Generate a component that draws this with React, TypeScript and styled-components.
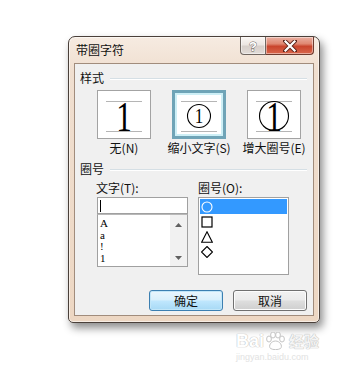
import React from "react";
import styled, { createGlobalStyle } from "styled-components";

const Global = createGlobalStyle`
  html, body { margin: 0; padding: 0; background: #ffffff; }
  body { font-family: "Noto Sans CJK SC", "Noto Sans", sans-serif; }
  * { box-sizing: border-box; }
`;

const Page = styled.div`
  position: relative;
  width: 353px;
  height: 375px;
  overflow: hidden;
  padding: 36px 0 0 68px;
  background: #ffffff;
`;

const Dialog = styled.div`
  width: 252px;
  height: 287px;
  display: flex;
  flex-direction: column;
  padding: 0 5px 6px 5px;
  border: 1px solid #4a403a;
  border-radius: 7px 7px 5px 5px;
  background: linear-gradient(180deg, #f6ebe1 0%, #f0dfd0 12%, #edd7c3 100%);
  box-shadow: inset 0 0 0 1px rgba(255, 255, 255, 0.55), 3px 5px 9px rgba(0, 0, 0, 0.45);
`;

const TitleBar = styled.div`
  height: 26px;
  display: flex;
  justify-content: space-between;
  align-items: flex-start;
`;

const Title = styled.div`
  padding: 6px 0 0 2px;
  font-size: 12px;
  line-height: 14px;
  color: #111;
`;

const CaptionButtons = styled.div`
  display: flex;
`;

const CaptionButton = styled.div<{ $close?: boolean }>`
  width: ${(p) => (p.$close ? 48 : 26)}px;
  height: 18px;
  display: flex;
  align-items: center;
  justify-content: center;
  border: 1px solid ${(p) => (p.$close ? "#6e3a2e" : "#6f6660")};
  border-top: none;
  border-left: ${(p) => (p.$close ? "none" : "1px solid #6f6660")};
  border-radius: ${(p) => (p.$close ? "0 0 4px 0" : "0 0 0 4px")};
  background: ${(p) =>
    p.$close
      ? "linear-gradient(180deg, #eab0a2 0%, #e08872 40%, #c9452d 55%, #d9674c 100%)"
      : "linear-gradient(180deg, #fbf7f4 0%, #ece6e2 45%, #d7cfca 55%, #e2dcd8 100%)"};
  box-shadow: inset 0 0 0 1px rgba(255, 255, 255, 0.45);
`;

const Client = styled.div`
  flex: 1;
  display: flex;
  flex-direction: column;
  background: #f0f0f0;
  border: 1px solid #a18c7c;
  padding: 7px 6px 4px 5px;
`;

const GroupHeader = styled.div`
  display: flex;
  align-items: center;
  gap: 6px;
  height: 14px;
  font-size: 12px;
  line-height: 14px;
  color: #111;
`;

const EtchedLine = styled.div`
  flex: 1;
  height: 2px;
  border-top: 1px solid #d5dfe5;
  border-bottom: 1px solid #ffffff;
  margin-top: 1px;
`;

const StylesRow = styled.div`
  display: flex;
  gap: 21px;
  padding-left: 17px;
  margin-top: 5px;
`;

const StyleColumn = styled.div`
  width: 54px;
  display: flex;
  flex-direction: column;
  align-items: center;
`;

const StyleBox = styled.div<{ $selected?: boolean }>`
  width: 54px;
  height: 49px;
  background: #ffffff;
  border: ${(p) => (p.$selected ? "3px solid #6fa4b7" : "1px solid #a3a3a3")};
  box-shadow: ${(p) => (p.$selected ? "inset 0 0 0 2px #cdeff6" : "none")};
  display: flex;
  align-items: center;
  justify-content: center;
  svg { overflow: visible; }
`;

const StyleLabel = styled.div`
  margin-top: 2px;
  white-space: nowrap;
  font-size: 12px;
  line-height: 14px;
  color: #111;
`;

const CircleHeader = styled(GroupHeader)`
  margin-top: 7px;
`;

const ListsRow = styled.div`
  display: flex;
  gap: 10px;
  padding-left: 16px;
  margin-top: 5px;
`;

const ListColumn = styled.div<{ $w: number }>`
  width: ${(p) => p.$w}px;
  display: flex;
  flex-direction: column;
`;

const FieldLabel = styled.div`
  font-size: 12px;
  line-height: 14px;
  height: 14px;
  color: #111;
  margin-bottom: 2px;
  white-space: nowrap;
`;

const TextInput = styled.div`
  margin-left: 1px;
  height: 17px;
  background: #fff;
  border: 1px solid #a0a0a0;
  display: flex;
  align-items: center;
  padding-left: 2px;
`;

const Caret = styled.div`
  width: 1px;
  height: 12px;
  background: #000;
`;

const CharList = styled.div`
  margin-left: 1px;
  height: 53px;
  background: #fff;
  border: 1px solid #a0a0a0;
  border-top-color: #b8b8b8;
  display: flex;
`;

const CharItems = styled.div`
  flex: 1;
  padding: 3px 0 0 2px;
  font-family: "Liberation Serif", "DejaVu Serif", serif;
  font-size: 11px;
  line-height: 11.7px;
  color: #000;
`;

const ScrollTrack = styled.div`
  width: 17px;
  background: #f1f1f1;
  display: flex;
  flex-direction: column;
  justify-content: space-between;
  align-items: center;
  padding: 8px 0 6px;
`;

const ShapeList = styled.div`
  height: 78px;
  background: #fff;
  border: 1px solid #a0a0a0;
  padding: 1px 1px 0 1px;
  display: flex;
  flex-direction: column;
`;

const ShapeRow = styled.div<{ $selected?: boolean }>`
  height: 15px;
  display: flex;
  align-items: center;
  padding-left: 1px;
  background: ${(p) => (p.$selected ? "#3399ff" : "transparent")};
`;

const ButtonRow = styled.div`
  display: flex;
  justify-content: flex-end;
  gap: 10px;
  margin-top: auto;
`;

const PushButton = styled.div<{ $default?: boolean }>`
  width: 74px;
  height: 21px;
  display: flex;
  align-items: center;
  justify-content: center;
  font-size: 12px;
  color: #111;
  border-radius: 3px;
  border: 1px solid ${(p) => (p.$default ? "#3c7fb1" : "#707070")};
  background: ${(p) =>
    p.$default
      ? "linear-gradient(180deg, #eaf6fd 0%, #d9f0fc 45%, #bee6fd 55%, #a7d9f5 100%)"
      : "linear-gradient(180deg, #f2f2f2 0%, #ebebeb 45%, #dddddd 55%, #cfcfcf 100%)"};
  box-shadow: ${(p) =>
    p.$default ? "inset 0 0 0 1px #c2e6f8" : "inset 0 0 0 1px #fcfcfc"};
`;

const Watermark = styled.div`
  position: absolute;
  left: 236px;
  top: 320px;
  width: 92px;
  display: flex;
  flex-direction: column;
  align-items: flex-start;
  color: #e6e6e6;
  pointer-events: none;
`;

const WmTop = styled.div`
  display: flex;
  align-items: flex-end;
  height: 30px;
  font-family: "Liberation Sans", Arial, sans-serif;
  font-weight: bold;
  font-size: 18px;
  line-height: 18px;
  color: #ffffff;
  text-shadow: 0 0 1px #b8b8b8, 0 0 1px #b8b8b8;
`;

const WmCn = styled.span`
  font-family: "Noto Sans CJK SC", sans-serif;
  font-size: 15px;
  margin-left: 3px;
  color: #f4f4f4;
`;

const WmUrl = styled.div`
  margin-top: 2px;
  font-family: "Liberation Sans", Arial, sans-serif;
  font-size: 9px;
  line-height: 10px;
  color: #e2e2e2;
`;

const GuideLines = () => (
  <>
    <line x1="9" y1="11.5" x2="45" y2="11.5" stroke="#b5b5b5" strokeWidth="1" />
    <line x1="9" y1="41.5" x2="45" y2="41.5" stroke="#b5b5b5" strokeWidth="1" />
  </>
);

const serif = '"Liberation Serif", "DejaVu Serif", serif';

const BigOne = () => (
  <g transform="translate(27 0) scale(0.72 1) translate(-27 0)">
    <text x="27" y="41" textAnchor="middle" fontFamily={serif} fontSize="43" fill="#000">1</text>
  </g>
);

const StyleNone = () => (
  <svg width="52" height="47" viewBox="1 1 52 47">
    <GuideLines />
    <BigOne />
  </svg>
);

const StyleShrink = () => (
  <svg width="48" height="43" viewBox="3 3 48 43">
    <GuideLines />
    <circle cx="27" cy="26" r="11.5" fill="none" stroke="#000" strokeWidth="1.1" />
    <g transform="translate(27 0) scale(0.85 1) translate(-27 0)">
      <text x="27" y="33.3" textAnchor="middle" fontFamily={serif} fontSize="20" fill="#000">1</text>
    </g>
  </svg>
);

const StyleEnlarge = () => (
  <svg width="52" height="47" viewBox="1 1 52 47">
    <GuideLines />
    <circle cx="27" cy="26" r="14.5" fill="none" stroke="#000" strokeWidth="1.1" />
    <BigOne />
  </svg>
);

const ShapeIcon = ({ kind, color }: { kind: string; color: string }) => (
  <svg width="12" height="12" viewBox="0 0 12 12">
    {kind === "circle" && <circle cx="6" cy="6" r="5" fill="none" stroke={color} strokeWidth="1.1" />}
    {kind === "square" && <rect x="1" y="1" width="10" height="10" fill="none" stroke={color} strokeWidth="1.2" />}
    {kind === "triangle" && <polygon points="6,0.8 11.3,11.2 0.7,11.2" fill="none" stroke={color} strokeWidth="1.1" />}
    {kind === "diamond" && <polygon points="6,0.5 11.5,6 6,11.5 0.5,6" fill="none" stroke={color} strokeWidth="1.1" />}
  </svg>
);

const Arrow = ({ up }: { up?: boolean }) => (
  <svg width="7" height="4" viewBox="0 0 7 4">
    <polygon points={up ? "3.5,0 7,4 0,4" : "0,0 7,0 3.5,4"} fill="#606060" />
  </svg>
);

const HelpGlyph = () => (
  <svg width="12" height="13" viewBox="0 0 12 13">
    <text x="6" y="11.5" textAnchor="middle" fontFamily='"Liberation Sans", Arial, sans-serif' fontWeight="bold" fontSize="13" fill="#ffffff" stroke="#6a6560" strokeWidth="0.9" paintOrder="stroke">?</text>
  </svg>
);

const CloseGlyph = () => (
  <svg width="14" height="12" viewBox="0 0 14 12">
    <path d="M2 1 L12 11 M12 1 L2 11" stroke="#5a241a" strokeWidth="4" strokeLinecap="square" />
    <path d="M2.5 1.5 L11.5 10.5 M11.5 1.5 L2.5 10.5" stroke="#ffffff" strokeWidth="2.2" strokeLinecap="square" />
  </svg>
);

const Paw = () => (
  <svg width="22" height="18" viewBox="0 0 22 18">
    <g fill="#ffffff" stroke="#c4c4c4" strokeWidth="1">
      <ellipse cx="5" cy="7" rx="2.4" ry="3" />
      <ellipse cx="9" cy="3" rx="2.4" ry="3" />
      <ellipse cx="14" cy="3" rx="2.4" ry="3" />
      <ellipse cx="18" cy="7" rx="2.4" ry="3" />
      <path d="M11.5 9 C7 9 4 14 6.5 16.5 C9 18 14 18 16.5 16.5 C19 14 16 9 11.5 9 Z" />
    </g>
  </svg>
);

const shapes = ["circle", "square", "triangle", "diamond"];
const chars = ["A", "a", "!", "1"];

export default function App() {
  return (
    <>
      <Global />
      <Page>
        <Dialog>
          <TitleBar>
            <Title>带圈字符</Title>
            <CaptionButtons>
              <CaptionButton>
                <HelpGlyph />
              </CaptionButton>
              <CaptionButton $close>
                <CloseGlyph />
              </CaptionButton>
            </CaptionButtons>
          </TitleBar>
          <Client>
            <GroupHeader>
              样式
              <EtchedLine />
            </GroupHeader>
            <StylesRow>
              <StyleColumn>
                <StyleBox>
                  <StyleNone />
                </StyleBox>
                <StyleLabel>无(N)</StyleLabel>
              </StyleColumn>
              <StyleColumn>
                <StyleBox $selected>
                  <StyleShrink />
                </StyleBox>
                <StyleLabel>缩小文字(S)</StyleLabel>
              </StyleColumn>
              <StyleColumn>
                <StyleBox>
                  <StyleEnlarge />
                </StyleBox>
                <StyleLabel>增大圈号(E)</StyleLabel>
              </StyleColumn>
            </StylesRow>
            <CircleHeader>
              圈号
              <EtchedLine />
            </CircleHeader>
            <ListsRow>
              <ListColumn $w={92}>
                <FieldLabel>文字(T):</FieldLabel>
                <TextInput>
                  <Caret />
                </TextInput>
                <CharList>
                  <CharItems>
                    {chars.map((c) => (
                      <div key={c}>{c}</div>
                    ))}
                  </CharItems>
                  <ScrollTrack>
                    <Arrow up />
                    <Arrow />
                  </ScrollTrack>
                </CharList>
              </ListColumn>
              <ListColumn $w={91}>
                <FieldLabel>圈号(O):</FieldLabel>
                <ShapeList>
                  {shapes.map((s, i) => (
                    <ShapeRow key={s} $selected={i === 0}>
                      <ShapeIcon kind={s} color={i === 0 ? "#ffffff" : "#000000"} />
                    </ShapeRow>
                  ))}
                </ShapeList>
              </ListColumn>
            </ListsRow>
            <ButtonRow>
              <PushButton $default>确定</PushButton>
              <PushButton>取消</PushButton>
            </ButtonRow>
          </Client>
        </Dialog>
        <Watermark>
          <WmTop>
            Bai
            <Paw />
            <WmCn>经验</WmCn>
          </WmTop>
          <WmUrl>jingyan.baidu.com</WmUrl>
        </Watermark>
      </Page>
    </>
  );
}
